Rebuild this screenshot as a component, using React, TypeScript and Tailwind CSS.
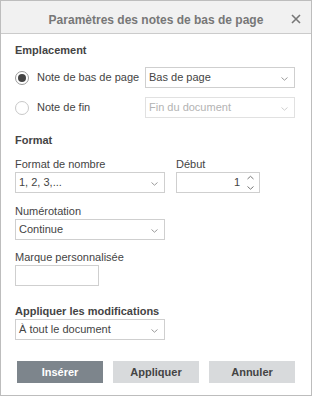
import React from "react";

const Chevron = ({ color = "#9a9a9a" }: { color?: string }) => (
  <svg width="7" height="4" viewBox="0 0 7 4" className="absolute right-[6px] top-[9px]">
    <path d="M0.5 0.5 L3.5 3.2 L6.5 0.5" fill="none" stroke={color} strokeWidth="1" />
  </svg>
);

const Select = ({
  value,
  width,
  disabled = false,
}: {
  value: string;
  width: string;
  disabled?: boolean;
}) => (
  <div
    className={`relative h-[21px] border bg-white flex items-center pl-[3px] ${width} ${
      disabled ? "border-[#e1e1e1] text-[#b3b3b3]" : "border-[#cfcfcf] text-[#444]"
    }`}
  >
    <span className="leading-[13px]">{value}</span>
    <Chevron color={disabled ? "#cfcfcf" : "#9a9a9a"} />
  </div>
);

const Radio = ({ checked }: { checked: boolean }) => (
  <div
    className={`w-[14px] h-[14px] rounded-full border flex items-center justify-center bg-white ${
      checked ? "border-[#9a9a9a]" : "border-[#c8c8c8]"
    }`}
  >
    {checked && <div className="w-[8px] h-[8px] rounded-full bg-[#444]" />}
  </div>
);

export default function App() {
  return (
    <div
      className="w-[312px] h-[396px] border border-[#bdbdbd] bg-white flex flex-col text-[11px] leading-[13px] text-[#444]"
      style={{ fontFamily: '"Liberation Sans", Arial, sans-serif' }}
    >
      <div className="relative h-[33px] shrink-0 bg-[#f1f1f1] border-b border-[#cbcbcb] flex justify-center pt-[12px]">
        <span className="text-[12px] leading-[14px] font-bold text-[#777]">
          Paramètres des notes de bas de page
        </span>
        <svg
          width="10"
          height="10"
          viewBox="0 0 10 10"
          className="absolute right-[10px] top-[13px]"
        >
          <path d="M1 1 L9 9 M9 1 L1 9" stroke="#777" strokeWidth="1.6" fill="none" />
        </svg>
      </div>

      <div className="flex flex-col pl-[14px] pt-[10px]">
        <div className="font-bold leading-[13px]">Emplacement</div>

        <div className="flex items-center mt-[10px] h-[21px]">
          <div className="w-[130px] flex items-center">
            <Radio checked />
            <span className="ml-[8px]">Note de bas de page</span>
          </div>
          <Select value="Bas de page" width="w-[150px]" />
        </div>

        <div className="flex items-center mt-[9px] h-[21px]">
          <div className="w-[130px] flex items-center">
            <Radio checked={false} />
            <span className="ml-[8px]">Note de fin</span>
          </div>
          <Select value="Fin du document" width="w-[150px]" disabled />
        </div>

        <div className="font-bold mt-[16px]">Format</div>

        <div className="flex mt-[11px] gap-[11px]">
          <div className="flex flex-col">
            <span>Format de nombre</span>
            <div className="mt-[1px]">
              <Select value="1, 2, 3,..." width="w-[150px]" />
            </div>
          </div>
          <div className="flex flex-col">
            <span>Début</span>
            <div className="relative mt-[1px] w-[84px] h-[21px] border border-[#cfcfcf] flex items-center justify-end pr-[19px]">
              <span>1</span>
              <svg width="7" height="16" viewBox="0 0 7 16" className="absolute right-[5px] top-[2px]">
                <path d="M0.5 4 L3.5 1.3 L6.5 4" fill="none" stroke="#777" strokeWidth="1" />
                <path d="M0.5 11.5 L3.5 14.2 L6.5 11.5" fill="none" stroke="#777" strokeWidth="1" />
              </svg>
            </div>
          </div>
        </div>

        <div className="mt-[12px]">Numérotation</div>
        <div className="mt-[1px]">
          <Select value="Continue" width="w-[150px]" />
        </div>

        <div className="mt-[11px]">Marque personnalisée</div>
        <div className="mt-[1px] w-[84px] h-[21px] border border-[#cfcfcf] bg-white" />

        <div className="font-bold mt-[19px]">Appliquer les modifications</div>
        <div className="mt-[1px]">
          <Select value="À tout le document" width="w-[150px]" />
        </div>
      </div>

      <div className="flex justify-center gap-[10px] mt-[21px]">
        <div className="w-[86px] h-[22px] bg-[#7d858c] text-white font-bold flex items-center justify-center">
          Insérer
        </div>
        <div className="w-[86px] h-[22px] bg-[#d8dadc] text-[#444] font-bold flex items-center justify-center">
          Appliquer
        </div>
        <div className="w-[86px] h-[22px] bg-[#d8dadc] text-[#444] font-bold flex items-center justify-center">
          Annuler
        </div>
      </div>
    </div>
  );
}
